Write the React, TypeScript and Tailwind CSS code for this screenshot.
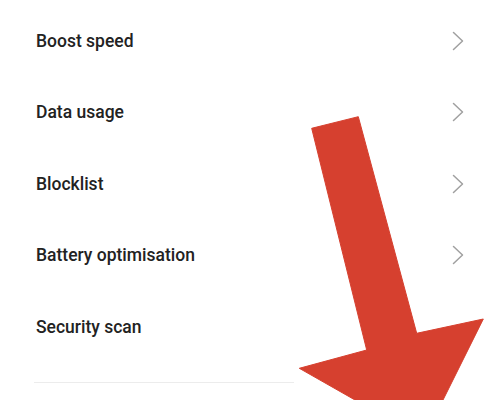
import React from "react";

const items = [
  { label: "Boost speed", chevron: true },
  { label: "Data usage", chevron: true },
  { label: "Blocklist", chevron: true },
  { label: "Battery optimisation", chevron: true },
  { label: "Security scan", chevron: false },
];

function Chevron() {
  return (
    <svg width="12" height="20" viewBox="0 0 12 20" className="shrink-0">
      <polyline
        points="1.5,1.5 10.5,10 1.5,18.5"
        fill="none"
        stroke="#a0a0a0"
        strokeWidth="1.5"
        strokeLinecap="round"
        strokeLinejoin="round"
      />
    </svg>
  );
}

export default function App() {
  return (
    <div
      className="relative w-[500px] h-[400px] overflow-hidden bg-white"
      style={{ fontFamily: "Roboto, 'Noto Sans', sans-serif" }}
    >
      <div className="flex flex-col pt-[5px] pl-[36px] pr-[36px]">
        {items.map((it) => (
          <div
            key={it.label}
            className="flex h-[71.5px] items-center justify-between"
          >
            <span className="text-[17.5px] font-medium text-[#222222]">
              {it.label}
            </span>
            {it.chevron && <Chevron />}
          </div>
        ))}
        <div className="mt-[19px] h-[1.5px] w-[260px] -ml-[2px] bg-[#ececec]" />
      </div>
      <svg
        className="absolute left-0 top-0"
        width="500"
        height="400"
        viewBox="0 0 500 400"
      >
        <polygon
          points="311.7,128.3 358.3,116.7 416.7,333.3 483.3,319 423.6,439 299.3,368.3 366.7,350"
          fill="#d6402f"
          stroke="#d6402f"
          strokeWidth="1"
          strokeLinejoin="miter"
        />
      </svg>
    </div>
  );
}
